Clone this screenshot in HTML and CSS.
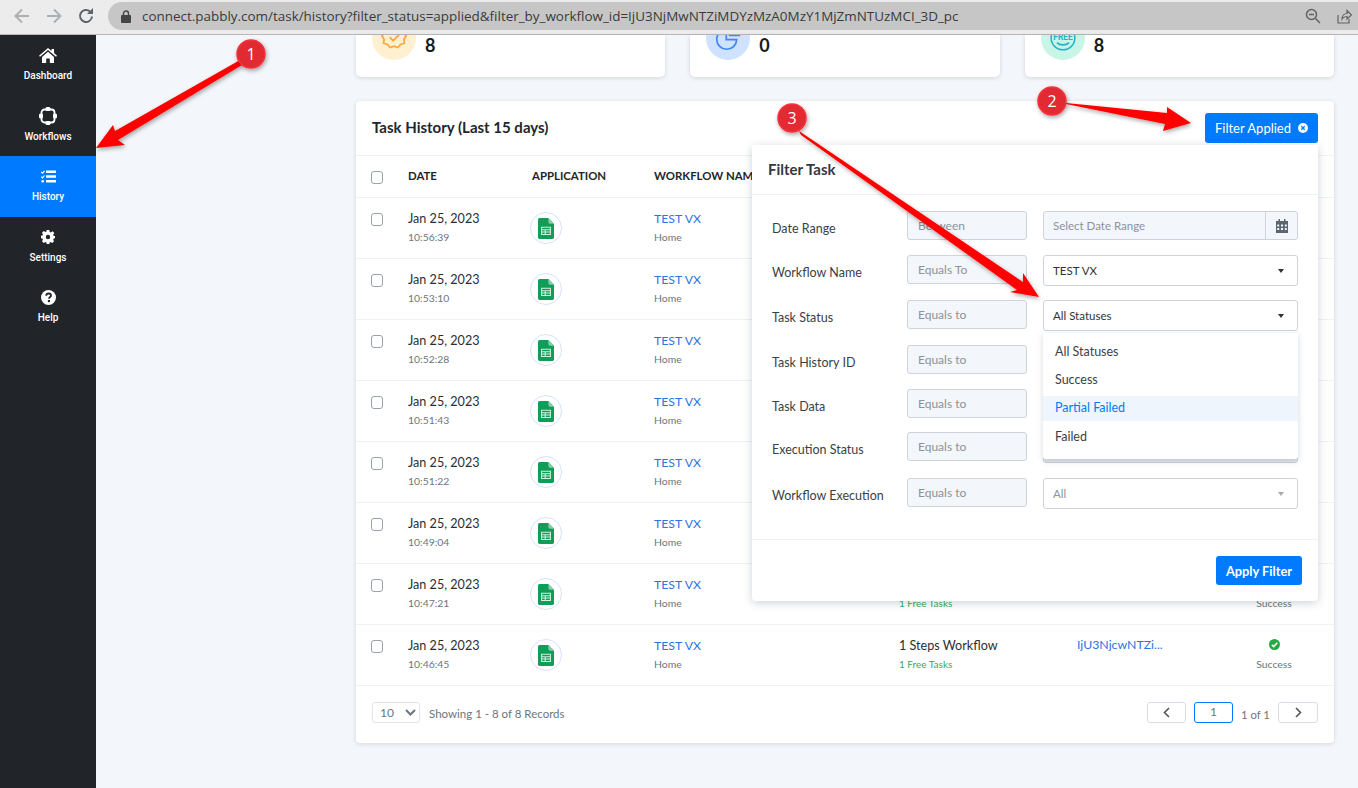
FILE: index.html
```html
<!DOCTYPE html>
<html lang="en">
<head>
    <meta charset="UTF-8">
    <meta name="viewport" content="width=device-width, initial-scale=1.0">
    <title>Task History</title>
    <link rel="stylesheet" href="styles.css">
</head>
<body>

    <svg class="defs" width="0" height="0">
        <symbol id="sheet" viewBox="0 0 20 26">
            <path d="M2 0H13L20 7V24a2 2 0 0 1-2 2H2a2 2 0 0 1-2-2V2a2 2 0 0 1 2-2Z" fill="#0f9d58"/>
            <path d="M13 0L20 7H15a2 2 0 0 1-2-2Z" fill="#87ceac"/>
            <path d="M4.500 11.500H15.500V20.500H4.500ZM4.500 14.500H15.500M4.500 17.500H15.500M9 14.500V20.500" fill="none" stroke="#d6f0e2" stroke-width="1.300"/>
        </symbol>
    </svg>

    <header class="browser-bar">
        <svg class="bar-icon back" width="18" height="18" viewBox="0 0 18 18"><path d="M16 9H3M9 2.500L2.500 9L9 15.500" fill="none" stroke="#adb0b3" stroke-width="2"/></svg>
        <svg class="bar-icon forward" width="18" height="18" viewBox="0 0 18 18"><path d="M2 9H15M9 2.500L15.500 9L9 15.500" fill="none" stroke="#adb0b3" stroke-width="2"/></svg>
        <svg class="bar-icon reload" width="18" height="18" viewBox="0 0 18 18"><path d="M15 9.500A6 6 0 1 1 13 4.500" fill="none" stroke="#5f6368" stroke-width="2"/><path d="M10 7H16V1Z" fill="#5f6368"/></svg>
        <div class="url-pill">
            <svg width="10" height="13" viewBox="0 0 10 13"><path d="M2.500 6V3.500a2.500 2.500 0 0 1 5 0V6" fill="none" stroke="#444" stroke-width="1.400"/><rect y="5" width="10" height="8" rx="1" fill="#444"/></svg>
            <span class="url-text">connect.pabbly.com/task/history?filter_status=applied&amp;filter_by_workflow_id=IjU3NjMwNTZiMDYzMzA0MzY1MjZmNTUzMCI_3D_pc</span>
            <svg class="pill-zoom" width="16" height="16" viewBox="0 0 16 16"><circle cx="6.500" cy="6.500" r="5" fill="none" stroke="#5f6368" stroke-width="1.500"/><path d="M10.500 10.500L15 15M4 6.500H9" fill="none" stroke="#5f6368" stroke-width="1.500"/></svg>
            <svg class="pill-share" width="15" height="15" viewBox="0 0 15 15"><path d="M1 6V14H12V10M5 10C5 6.500 7.500 4.500 10 4.500V1.500L14.500 6L10 10V7.500C8 7.500 6 8.500 5 10Z" fill="none" stroke="#5f6368" stroke-width="1.200"/></svg>
        </div>
    </header>

    <div class="app">
        <nav class="sidebar">
            <a class="nav-item">
                <i class="nav-icon"><svg width="18" height="15" viewBox="0 0 18 15"><path d="M9 0L12.500 3V1H15V5.100L18 7.700L17 8.800L9 2L1 8.800L0 7.700Z" fill="#fff"/><path d="M3 9L9 3.800L15 9V15H10.800V10.500H7.200V15H3Z" fill="#fff"/></svg></i>
                <span>Dashboard</span>
            </a>
            <a class="nav-item">
                <i class="nav-icon"><svg width="18" height="18" viewBox="0 0 18 18"><rect x="2.500" y="2.500" width="13" height="13" rx="3" fill="none" stroke="#fff" stroke-width="1.800"/><rect x="6.500" y="0" width="5" height="4" rx="1.500" fill="#fff"/><rect x="6.500" y="14" width="5" height="4" rx="1.500" fill="#fff"/><rect x="0" y="6.500" width="4" height="5" rx="1.500" fill="#fff"/><rect x="14" y="6.500" width="4" height="5" rx="1.500" fill="#fff"/></svg></i>
                <span>Workflows</span>
            </a>
            <a class="nav-item active">
                <i class="nav-icon"><svg width="15" height="13" viewBox="0 0 15 13"><path d="M5 0.500H15V3H5ZM5 5.300H15V7.800H5ZM5 10H15V12.500H5Z" fill="#fff"/><path d="M0.300 2L1.500 3.200L3.500 0.800M0.300 6.700L1.500 7.900L3.500 5.500" fill="none" stroke="#fff" stroke-width="1.100"/><circle cx="1.700" cy="11.300" r="1.300" fill="#fff"/></svg></i>
                <span>History</span>
            </a>
            <a class="nav-item">
                <i class="nav-icon"><svg width="14" height="14" viewBox="0 0 14 14"><path fill-rule="evenodd" d="M5.700 0H8.300L8.700 1.900L9.900 2.400L11.500 1.300L13.300 3.100L12.200 4.700L12.700 5.900L14 6V8.300L12.700 8.500L12.200 9.700L13 11.300L11.300 13L9.700 12L8.600 12.500L8.300 14H5.700L5.400 12.500L4.300 12L2.700 13L1 11.300L1.900 9.700L1.400 8.500L0 8.300V5.700L1.400 5.500L1.900 4.300L1 2.700L2.700 1L4.300 2L5.400 1.500ZM7 4.800a2.200 2.200 0 1 0 0 4.400a2.200 2.200 0 1 0 0-4.400Z" fill="#fff"/></svg></i>
                <span>Settings</span>
            </a>
            <a class="nav-item">
                <i class="nav-icon"><svg width="15" height="15" viewBox="0 0 15 15"><circle cx="7.500" cy="7.500" r="7.500" fill="#fff"/><path d="M5.200 5.700C5.300 4.300 6.300 3.500 7.600 3.500C9 3.500 10 4.300 10 5.500C10 7 8 7 8 8.700" fill="none" stroke="#212529" stroke-width="1.800"/><rect x="6.900" y="10" width="2.100" height="2.100" fill="#212529"/></svg></i>
                <span>Help</span>
            </a>
        </nav>

        <main class="content">
            <section class="stat-row">
                <div class="stat-card">
                    <div class="stat-icon yellow">
                        <svg width="26" height="26" viewBox="0 0 30 30"><path d="M15 2L19 5L24 4.500L25.500 9L29 12.500L26.500 16.500L27 21L22.500 22.500L19.500 26L15 24.500L10.500 26L7.500 22.500L3 21L3.500 16.500L1 12.500L4.500 9L6 4.500L11 5Z" fill="none" stroke="#f9a942" stroke-width="2.100"/><path d="M10 14L14 18L21 11" fill="none" stroke="#f9a942" stroke-width="2.100"/></svg>
                    </div>
                    <strong>8</strong>
                </div>
                <div class="stat-card">
                    <div class="stat-icon blue">
                        <svg width="26" height="26" viewBox="0 0 30 30"><path d="M13 5A11.500 11.500 0 1 0 25 17H13Z" fill="none" stroke="#3f87f5" stroke-width="2"/><path d="M17 1V12H28A11 11 0 0 0 17 1Z" fill="none" stroke="#3f87f5" stroke-width="2"/></svg>
                    </div>
                    <strong>0</strong>
                </div>
                <div class="stat-card">
                    <div class="stat-icon green">
                        <svg width="26" height="26" viewBox="0 0 34 34"><circle cx="17" cy="17" r="15.500" fill="none" stroke="#22b5c9" stroke-width="2"/><text x="17" y="19" class="free-text">FREE</text><path d="M9 23C13 27 21 27 25 23" fill="none" stroke="#22b5c9" stroke-width="2"/></svg>
                    </div>
                    <strong>8</strong>
                </div>
            </section>

            <section class="history-card">
                <div class="history-head">
                    <h2>Task History (Last 15 days)</h2>
                    <button class="btn-primary filter-btn">Filter Applied
                        <svg width="10" height="10" viewBox="0 0 10 10"><circle cx="5" cy="5" r="5" fill="#fff"/><path d="M3.300 3.300L6.700 6.700M6.700 3.300L3.300 6.700" stroke="#007bff" stroke-width="1.300"/></svg>
                    </button>
                </div>

                <div class="task-row task-head">
                    <span class="check"></span>
                    <span>DATE</span>
                    <span class="head-app">APPLICATION</span>
                    <span>WORKFLOW NAME</span>
                </div>

                <div class="task-row">
                    <span class="check"></span>
                    <div><p>Jan 25, 2023</p><small>10:56:39</small></div>
                    <div class="app-icon"><svg width="16" height="21"><use href="#sheet"/></svg></div>
                    <div><p class="link">TEST VX</p><small>Home</small></div>
                </div>
                <div class="task-row">
                    <span class="check"></span>
                    <div><p>Jan 25, 2023</p><small>10:53:10</small></div>
                    <div class="app-icon"><svg width="16" height="21"><use href="#sheet"/></svg></div>
                    <div><p class="link">TEST VX</p><small>Home</small></div>
                </div>
                <div class="task-row">
                    <span class="check"></span>
                    <div><p>Jan 25, 2023</p><small>10:52:28</small></div>
                    <div class="app-icon"><svg width="16" height="21"><use href="#sheet"/></svg></div>
                    <div><p class="link">TEST VX</p><small>Home</small></div>
                </div>
                <div class="task-row">
                    <span class="check"></span>
                    <div><p>Jan 25, 2023</p><small>10:51:43</small></div>
                    <div class="app-icon"><svg width="16" height="21"><use href="#sheet"/></svg></div>
                    <div><p class="link">TEST VX</p><small>Home</small></div>
                </div>
                <div class="task-row">
                    <span class="check"></span>
                    <div><p>Jan 25, 2023</p><small>10:51:22</small></div>
                    <div class="app-icon"><svg width="16" height="21"><use href="#sheet"/></svg></div>
                    <div><p class="link">TEST VX</p><small>Home</small></div>
                </div>
                <div class="task-row">
                    <span class="check"></span>
                    <div><p>Jan 25, 2023</p><small>10:49:04</small></div>
                    <div class="app-icon"><svg width="16" height="21"><use href="#sheet"/></svg></div>
                    <div><p class="link">TEST VX</p><small>Home</small></div>
                </div>
                <div class="task-row">
                    <span class="check"></span>
                    <div><p>Jan 25, 2023</p><small>10:47:21</small></div>
                    <div class="app-icon"><svg width="16" height="21"><use href="#sheet"/></svg></div>
                    <div><p class="link">TEST VX</p><small>Home</small></div>
                    <div><p>1 Steps Workflow</p><small class="free">1 Free Tasks</small></div>
                    <p class="link">IjU3NjcwNTZi...</p>
                    <div class="col-status"><svg width="11" height="11" viewBox="0 0 11 11"><circle cx="5.500" cy="5.500" r="5.500" fill="#28a745"/><path d="M2.800 5.700L4.700 7.600L8.300 3.800" fill="none" stroke="#fff" stroke-width="1.500"/></svg><small>Success</small></div>
                </div>
                <div class="task-row">
                    <span class="check"></span>
                    <div><p>Jan 25, 2023</p><small>10:46:45</small></div>
                    <div class="app-icon"><svg width="16" height="21"><use href="#sheet"/></svg></div>
                    <div><p class="link">TEST VX</p><small>Home</small></div>
                    <div><p>1 Steps Workflow</p><small class="free">1 Free Tasks</small></div>
                    <p class="link">IjU3NjcwNTZi...</p>
                    <div class="col-status"><svg width="11" height="11" viewBox="0 0 11 11"><circle cx="5.500" cy="5.500" r="5.500" fill="#28a745"/><path d="M2.800 5.700L4.700 7.600L8.300 3.800" fill="none" stroke="#fff" stroke-width="1.500"/></svg><small>Success</small></div>
                </div>

                <div class="pager-row">
                    <div class="per-page">10
                        <svg width="11" height="7" viewBox="0 0 11 7"><path d="M1 1L5.500 5.500L10 1" fill="none" stroke="#6c757d" stroke-width="2"/></svg>
                    </div>
                    <span class="showing">Showing 1 - 8 of 8 Records</span>
                    <div class="pager">
                        <button class="page-btn"><svg width="7" height="11" viewBox="0 0 7 11"><path d="M6 1L1.500 5.500L6 10" fill="none" stroke="#555" stroke-width="1.600"/></svg></button>
                        <span class="page-now">1</span>
                        <span class="page-of">1 of 1</span>
                        <button class="page-btn next"><svg width="7" height="11" viewBox="0 0 7 11"><path d="M1 1L5.500 5.500L1 10" fill="none" stroke="#555" stroke-width="1.600"/></svg></button>
                    </div>
                </div>

                <!-- filter popup -->
                <div class="filter-pop">
                    <h3>Filter Task</h3>
                    <div class="filter-form">
                        <label>Date Range</label>
                        <span class="op-box">Between</span>
                        <div class="date-box"><span>Select Date Range</span>
                            <i class="date-addon"><svg width="12" height="14" viewBox="0 0 12 14"><path fill-rule="evenodd" d="M2.500 0H4V2H8V0H9.500V2H12V14H0V2H2.500ZM1.200 5.500V7.500H3.200V5.500ZM5 5.500V7.500H7V5.500ZM8.800 5.500V7.500H10.800V5.500ZM1.200 9V11H3.200V9ZM5 9V11H7V9ZM8.800 9V11H10.800V9Z" fill="#5c6670"/></svg></i>
                        </div>

                        <label>Workflow Name</label>
                        <span class="op-box">Equals To</span>
                        <div class="select-box">TEST VX<i class="caret"></i></div>

                        <label>Task Status</label>
                        <span class="op-box">Equals to</span>
                        <div class="select-box">All Statuses<i class="caret"></i></div>

                        <label>Task History ID</label>
                        <span class="op-box">Equals to</span>
                        <div class="select-box"></div>

                        <label>Task Data</label>
                        <span class="op-box">Equals to</span>
                        <div class="select-box"></div>

                        <label>Execution Status</label>
                        <span class="op-box">Equals to</span>
                        <div class="select-box greyed"></div>

                        <label>Workflow Execution</label>
                        <span class="op-box">Equals to</span>
                        <div class="select-box muted">All<i class="caret"></i></div>
                    </div>
                    <div class="filter-foot">
                        <button class="btn-primary apply-btn">Apply Filter</button>
                    </div>

                    <ul class="status-menu">
                        <li>All Statuses</li>
                        <li>Success</li>
                        <li class="current">Partial Failed</li>
                        <li>Failed</li>
                    </ul>
                </div>
            </section>
        </main>
    </div>

    <!-- red arrows and numbers drawn on top of the screenshot -->
    <svg class="marks" width="1358" height="788" viewBox="0 0 1358 788">
        <defs>
            <filter id="soft" x="-20%" y="-20%" width="140%" height="140%"><feDropShadow dx="1" dy="2" stdDeviation="2" flood-color="#000" flood-opacity="0.35"/></filter>
        </defs>
        <g filter="url(#soft)" fill="#fe0000">
            <polygon points="240,60 115,131 113,125 96,148 125,145 118,140 242,65"/>
            <polygon points="1056,102 1167,113 1167,107 1191,123 1163,131 1165,124"/>
            <polygon points="799,131 1023,282 1023,273 1039,297 1010,292 1017,290 801,135"/>
        </g>
        <g filter="url(#soft)">
            <circle cx="251" cy="54" r="14" class="dot"/>
            <circle cx="1052" cy="101" r="14" class="dot"/>
            <circle cx="792" cy="118" r="14" class="dot"/>
        </g>
        <text x="251" y="60" class="dot-num">1</text>
        <text x="1052" y="107" class="dot-num">2</text>
        <text x="792" y="124" class="dot-num">3</text>
    </svg>

</body>
</html>
```

FILE: styles.css
```css
:root {
    --blue: #007bff;
    --dark: #212529;
    --line: #edf2f9;
    --page-bg: #f3f6fa;
    --text: #272b30;
    --grey-text: #6c757d;
    --field-line: #ced4da;
}

* {
    box-sizing: border-box;
}

html, body {
    height: 100%;
}

body {
    margin: 0;
    overflow: hidden;
    position: relative;
    font-family: Lato, "Noto Sans", sans-serif;
    font-size: 13px;
    color: var(--text);
    background-color: var(--page-bg);
}

p, h2, h3, ul {
    margin: 0;
    padding: 0;
}

.defs {
    position: absolute;
}

/* browser bar */
.browser-bar {
    height: 35px;
    display: flex;
    align-items: flex-start;
    padding-top: 2px;
    background-color: #ececec;
    border-bottom: 1px solid #b8b8b8;
}

.bar-icon {
    flex: none;
    margin-top: 5px;
}

.back {
    margin-left: 13px;
}

.forward {
    margin-left: 14px;
}

.reload {
    margin-left: 14px;
}

.url-pill {
    flex: 1;
    height: 28px;
    margin-left: 13px;
    padding-left: 13px;
    display: flex;
    align-items: center;
    background-color: #c6c6c6;
    border-radius: 14px 0 0 14px;
}

.url-text {
    margin-left: 11px;
    font-family: "Open Sans", sans-serif;
    font-size: 13.450px;
    color: #3a3a3a;
    white-space: nowrap;
}

.pill-zoom {
    margin-left: auto;
}

.pill-share {
    margin-left: 16px;
    margin-right: 6px;
}

/* layout */
.app {
    display: flex;
    height: 753px;
}

.sidebar {
    width: 96px;
    flex: none;
    background-color: var(--dark);
}

.nav-item {
    height: 61px;
    padding-top: 11px;
    display: flex;
    flex-direction: column;
    align-items: center;
    gap: 5px;
    color: #fff;
    font-family: Roboto, sans-serif;
    font-size: 10px;
    font-weight: 500;
    line-height: 14px;
}

.nav-item:first-child {
    height: 60px;
}

.nav-item:nth-child(2) {
    padding-top: 12px;
}

.nav-item:last-child {
    padding-top: 10px;
}

.nav-item.active {
    background-color: var(--blue);
}

.nav-icon {
    height: 18px;
    display: flex;
    align-items: center;
}

.content {
    flex: 1;
    padding: 0 24px 0 260px;
}

/* stat cards */
.stat-row {
    display: grid;
    grid-template-columns: repeat(3, 1fr);
    gap: 25px;
}

.stat-card {
    height: 42px;
    padding: 0 16px 17px;
    display: flex;
    align-items: flex-end;
    gap: 9px;
    overflow: hidden;
    background-color: #fff;
    border-radius: 0 0 5px 5px;
    box-shadow: 0 1px 4px rgba(60, 75, 100, 0.18);
}

.stat-card strong {
    font-size: 18px;
    line-height: 20px;
    margin-bottom: 5px;
    color: #151a20;
}

.stat-icon {
    width: 44px;
    height: 44px;
    flex: none;
    display: flex;
    align-items: center;
    justify-content: center;
    border-radius: 50%;
}

.stat-icon.yellow {
    background-color: #fff0cf;
}

.stat-icon.blue {
    background-color: #cfe2ff;
}

.stat-icon.green {
    background-color: #c9f5e6;
}

.free-text {
    font-family: Roboto, sans-serif;
    font-size: 11px;
    font-weight: 700;
    fill: #22b5c9;
    text-anchor: middle;
}

/* history card */
.history-card {
    position: relative;
    height: 642px;
    margin-top: 24px;
    background-color: #fff;
    border-radius: 4px;
    box-shadow: 0 1px 4px rgba(60, 75, 100, 0.18);
}

.history-head {
    height: 54px;
    padding: 12px 16px;
    display: flex;
    justify-content: space-between;
    align-items: flex-start;
}

.history-head h2 {
    font-size: 15px;
    font-weight: 700;
    line-height: 28px;
    color: #22262b;
}

.btn-primary {
    font-family: Lato, sans-serif;
    color: #fff;
    border: 0;
    background-color: var(--blue);
    border-radius: 3px;
}

.filter-btn {
    width: 113px;
    height: 30px;
    display: flex;
    align-items: center;
    justify-content: center;
    gap: 7px;
    font-size: 13px;
}

.task-row {
    height: 61px;
    padding: 0 0 2px 15px;
    display: grid;
    grid-template-columns: 37px 122px 124px 245px 178px 155px 84px;
    align-items: center;
    border-top: 1px solid var(--line);
}

.task-row p {
    font-size: 12.600px;
    line-height: 18px;
    color: #2a2e33;
}

.task-row small {
    display: block;
    margin-top: 2px;
    font-size: 10.400px;
    line-height: 15px;
    color: var(--grey-text);
}

.task-row small.free {
    font-size: 10px;
    color: #37a956;
}

.task-row p.link {
    font-size: 12.300px;
    color: #2b74e8;
}

.task-row > p.link {
    margin-bottom: 19px;
}

.task-head {
    height: 42px;
    padding-bottom: 2px;
    font-size: 11.400px;
    font-weight: 700;
    color: #22262b;
}

.head-app {
    margin-left: 2px;
}

.check {
    width: 12px;
    height: 13px;
    margin-bottom: 15px;
    border: 1px solid #9aa1a9;
    border-radius: 3px;
    background-color: #fff;
}

.task-head .check {
    margin: 3px 0 0;
}

.app-icon {
    width: 32px;
    height: 32px;
    margin-top: 2px;
    display: flex;
    align-items: center;
    justify-content: center;
    border: 1px solid #d5e3fb;
    border-radius: 50%;
}

.col-status {
    margin-top: 2px;
    text-align: center;
}

.col-status svg {
    display: block;
    margin: 0 auto;
}

.col-status small {
    margin-top: 7px;
}

/* pager */
.pager-row {
    height: 58px;
    padding: 16px 16px 0;
    display: flex;
    align-items: flex-start;
    border-top: 1px solid var(--line);
    color: var(--grey-text);
}

.per-page {
    width: 48px;
    height: 21px;
    padding: 0 3px 0 7px;
    display: flex;
    justify-content: space-between;
    align-items: center;
    border: 1px solid #e0e4ea;
    border-radius: 3px;
    font-size: 12px;
}

.showing {
    margin-left: 9px;
    font-size: 11.500px;
    line-height: 24px;
}

.pager {
    margin-left: auto;
    display: flex;
    align-items: flex-start;
}

.page-btn {
    width: 39px;
    height: 21px;
    padding: 0;
    display: flex;
    align-items: center;
    justify-content: center;
    background-color: #fff;
    border: 1px solid #d9deea;
    border-radius: 3px;
}

.page-btn.next {
    width: 40px;
}

.page-now {
    width: 39px;
    height: 21px;
    margin-left: 8px;
    text-align: center;
    line-height: 17px;
    font-size: 12px;
    border: 1px solid var(--blue);
    border-radius: 3px;
}

.page-of {
    width: 28px;
    margin: 0 9px 0 8px;
    font-size: 11.300px;
    line-height: 25px;
    white-space: nowrap;
}

/* filter popup */
.filter-pop {
    position: absolute;
    top: 44px;
    right: 16px;
    width: 566px;
    height: 456px;
    background-color: #fff;
    border-radius: 0 0 4px 4px;
    box-shadow: 0 2px 8px rgba(60, 75, 100, 0.25);
}

.filter-pop h3 {
    height: 50px;
    padding-left: 16px;
    font-size: 15px;
    font-weight: 700;
    line-height: 48px;
    color: #34393f;
    border-bottom: 1px solid var(--line);
}

.filter-form {
    height: 345px;
    padding: 16px 20px 0;
    display: grid;
    grid-template-columns: 135px 120px 271px;
    grid-template-rows: 44px 45px 45px 44px 43px 46px 31px;
    border-bottom: 1px solid var(--line);
}

.filter-form label {
    font-size: 12.500px;
    line-height: 35px;
    color: #3a3f45;
}

.op-box {
    height: 29px;
    padding-left: 10px;
    font-size: 12px;
    line-height: 27px;
    color: #8b939b;
    background-color: var(--page-bg);
    border: 1px solid var(--field-line);
    border-radius: 3px;
}

.select-box, .date-box {
    position: relative;
    width: 255px;
    height: 31px;
    margin-left: 16px;
    padding-left: 9px;
    font-size: 11.500px;
    line-height: 29px;
    color: #2f3439;
    background-color: #fff;
    border: 1px solid var(--field-line);
    border-radius: 3px;
}

.date-box {
    height: 29px;
    line-height: 27px;
    color: #8b939b;
    background-color: var(--page-bg);
}

.date-addon {
    position: absolute;
    top: 0;
    right: 0;
    width: 32px;
    height: 27px;
    display: flex;
    align-items: center;
    justify-content: center;
    border-left: 1px solid var(--field-line);
}

.caret {
    position: absolute;
    top: 13px;
    right: 13px;
    border-top: 4px solid #2f3439;
    border-left: 3.500px solid transparent;
    border-right: 3.500px solid transparent;
}

.select-box.muted {
    color: #8b939b;
}

.select-box.muted .caret {
    border-top-color: #a4abb2;
}

.select-box.greyed {
    background-color: #e4e7ec;
}

.filter-foot {
    padding: 16px 16px 0 0;
    display: flex;
    justify-content: flex-end;
}

.apply-btn {
    width: 86px;
    height: 29px;
    font-size: 12.800px;
    font-weight: 700;
}

.status-menu {
    position: absolute;
    top: 188px;
    left: 291px;
    width: 255px;
    height: 126px;
    padding-top: 5px;
    list-style: none;
    font-size: 12.500px;
    color: #3a3f45;
    background-color: #fff;
    box-shadow: 0 2px 6px rgba(60, 75, 100, 0.22);
    border-radius: 0 0 3px 3px;
}

.status-menu li {
    height: 28px;
    padding-left: 12px;
    line-height: 28px;
}

.status-menu li.current {
    height: 25px;
    margin: 2px 0;
    line-height: 24px;
    color: var(--blue);
    background-color: #eef5fc;
}

/* annotations */
.marks {
    position: absolute;
    top: 0;
    left: 0;
    pointer-events: none;
}

.dot {
    fill: #e12b33;
    stroke: #f5333b;
    stroke-width: 1.500;
}

.dot-num {
    font-family: "Open Sans", sans-serif;
    font-size: 16px;
    fill: #fff;
    text-anchor: middle;
}
```
